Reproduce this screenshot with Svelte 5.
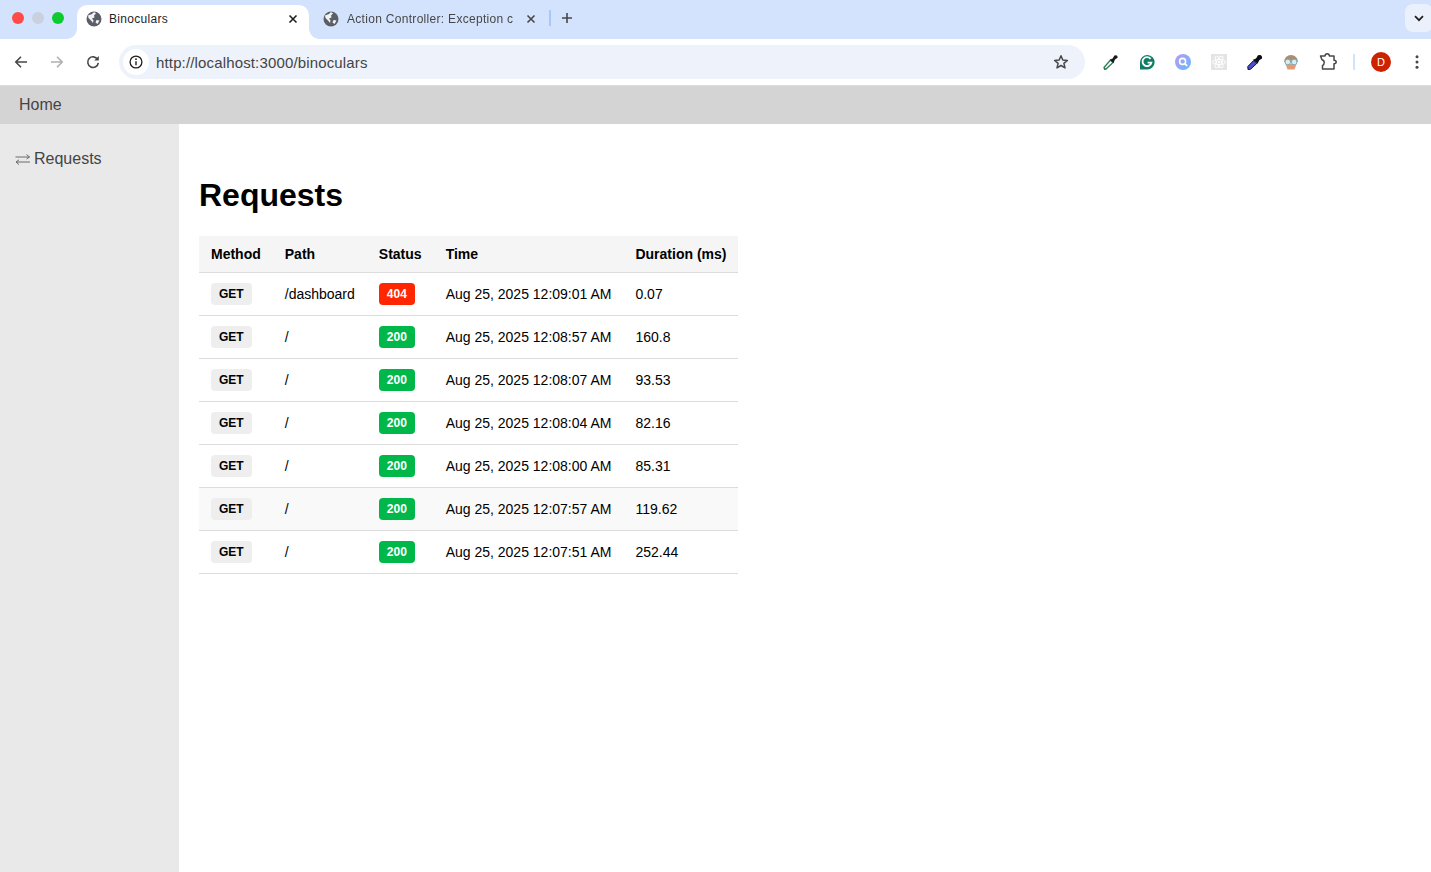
<script>
  const requests = [
    { path: "/dashboard", status: 404, time: "Aug 25, 2025 12:09:01 AM", duration: "0.07" },
    { path: "/", status: 200, time: "Aug 25, 2025 12:08:57 AM", duration: "160.8" },
    { path: "/", status: 200, time: "Aug 25, 2025 12:08:07 AM", duration: "93.53" },
    { path: "/", status: 200, time: "Aug 25, 2025 12:08:04 AM", duration: "82.16" },
    { path: "/", status: 200, time: "Aug 25, 2025 12:08:00 AM", duration: "85.31" },
    { path: "/", status: 200, time: "Aug 25, 2025 12:07:57 AM", duration: "119.62", hover: true },
    { path: "/", status: 200, time: "Aug 25, 2025 12:07:51 AM", duration: "252.44" }
  ];
</script>

{#snippet globe()}
  <svg class="globe" width="16" height="16" viewBox="0 0 16 16">
    <circle cx="8" cy="8" r="7.5" fill="#5b5e66" />
    <path d="M2 4.5 L6 3 L8 1 L10 2.5 L8 4.5 L8.5 6.5 L6 7.5 L7.5 9.5 L7 12 L5.5 10 L2.5 7 Z" fill="#fff" opacity="0.92" />
    <path d="M10.5 9 L13.5 9.5 L11.5 13 L9.5 11.5 Z" fill="#fff" opacity="0.92" />
  </svg>
{/snippet}

<div class="browser">
  <div class="tabstrip">
    <div class="lights">
      <span class="light red"></span>
      <span class="light grey"></span>
      <span class="light green"></span>
    </div>
    <div class="tab active">
      {@render globe()}
      <span class="tab-title">Binoculars</span>
      <svg class="close" width="10" height="10" viewBox="0 0 10 10"><path d="M1.5 1.5 L8.5 8.5 M8.5 1.5 L1.5 8.5" stroke="#1f1f1f" stroke-width="1.6" /></svg>
    </div>
    <div class="tab">
      {@render globe()}
      <span class="tab-title faded">Action Controller: Exception c</span>
      <svg class="close" width="10" height="10" viewBox="0 0 10 10"><path d="M1.5 1.5 L8.5 8.5 M8.5 1.5 L1.5 8.5" stroke="#474747" stroke-width="1.6" /></svg>
    </div>
    <span class="tab-sep"></span>
    <svg class="plus" width="12" height="12" viewBox="0 0 12 12"><path d="M6 1 V11 M1 6 H11" stroke="#474747" stroke-width="1.6" /></svg>
    <div class="tab-menu">
      <svg width="10" height="7" viewBox="0 0 10 7"><path d="M1 1.2 L5 5.2 L9 1.2" fill="none" stroke="#1f1f1f" stroke-width="1.7" /></svg>
    </div>
  </div>

  <div class="toolbar">
    <button class="nav-btn" aria-label="Back">
      <svg width="14" height="14" viewBox="0 0 14 14"><path d="M13 7 H2 M7 1.8 L1.8 7 L7 12.2" fill="none" stroke="#474747" stroke-width="1.6" /></svg>
    </button>
    <button class="nav-btn" aria-label="Forward">
      <svg width="14" height="14" viewBox="0 0 14 14"><path d="M1 7 H12 M7 1.8 L12.2 7 L7 12.2" fill="none" stroke="#b0b0b0" stroke-width="1.6" /></svg>
    </button>
    <button class="nav-btn" aria-label="Reload">
      <svg width="14" height="14" viewBox="0 0 14 14"><path d="M11.6 4.4 A5.3 5.3 0 1 0 12.3 7.8" fill="none" stroke="#474747" stroke-width="1.6" /><path d="M12.8 1 V5.6 H8.2 Z" fill="#474747" /></svg>
    </button>
    <div class="omnibox">
      <span class="info">
        <svg width="14" height="14" viewBox="0 0 14 14"><circle cx="7" cy="7" r="5.9" fill="none" stroke="#1f1f1f" stroke-width="1.3" /><path d="M7 6.2 V10.2" stroke="#1f1f1f" stroke-width="1.4" /><circle cx="7" cy="4.2" r="0.9" fill="#1f1f1f" /></svg>
      </span>
      <span class="url">http://localhost:3000/binoculars</span>
      <svg class="star" width="16" height="16" viewBox="0 0 16 16"><path d="M8 1.8 L9.8 6 L14.4 6.4 L10.9 9.4 L12 13.9 L8 11.5 L4 13.9 L5.1 9.4 L1.6 6.4 L6.2 6 Z" fill="none" stroke="#474747" stroke-width="1.5" stroke-linejoin="round" /></svg>
    </div>
    <div class="extensions">
      <svg width="16" height="16" viewBox="0 0 16 16"><path d="M1.5 15 L1 13.5 L7.5 6 L10 8.5 L3 15 Z" fill="none" stroke="#2f7d58" stroke-width="1.3" /><path d="M1 15.5 L3 15.5 L1 13 Z" fill="#1f6e4c" /><path d="M6.8 5.8 L9.6 4.6 L11.4 1.6 Q15 0 14.6 3.8 L12 5.6 L10.4 9.2 Z" fill="#1b1b1b" /></svg>
      <svg width="16" height="16" viewBox="0 0 16 16"><path d="M1 15.5 V8 A7.3 7.3 0 1 1 8 15.5 Z" fill="#0f7c64" /><path d="M11.6 4.9 A4.5 4.5 0 1 0 12.4 8.6 H8.6" fill="none" stroke="#fff" stroke-width="1.9" /></svg>
      <svg width="16" height="16" viewBox="0 0 16 16"><defs><linearGradient id="lens" x1="0" y1="0" x2="1" y2="1"><stop offset="0" stop-color="#b79cf5" /><stop offset="1" stop-color="#67b8fb" /></linearGradient></defs><circle cx="8" cy="8" r="8" fill="url(#lens)" /><circle cx="7.6" cy="7.4" r="3" fill="none" stroke="#fff" stroke-width="1.6" /><path d="M9.8 9.6 L12.2 12" stroke="#fff" stroke-width="1.7" /></svg>
      <svg width="16" height="16" viewBox="0 0 16 16"><rect width="16" height="16" fill="#e4e4e4" /><g fill="none" stroke="#fff" stroke-width="0.9"><ellipse cx="8" cy="8" rx="6.5" ry="2.5" /><ellipse cx="8" cy="8" rx="6.5" ry="2.5" transform="rotate(60 8 8)" /><ellipse cx="8" cy="8" rx="6.5" ry="2.5" transform="rotate(120 8 8)" /></g><circle cx="8" cy="8" r="1.3" fill="#fff" /></svg>
      <svg width="16" height="16" viewBox="0 0 16 16"><path d="M1 15.5 L0.8 12.5 L6.6 6.5 L9.8 9.4 L3.6 15.2 Z" fill="#4a50c8" stroke="#10103a" stroke-width="1" /><path d="M6 5.8 L9 4.4 L11 1.2 Q15.6 0 15 4.6 L12.2 6.2 L10.6 9.8 Z" fill="#0c0c14" /></svg>
      <svg width="16" height="16" viewBox="0 0 16 16"><path d="M1 8 A7 7 0 0 1 15 8 Z" fill="#a98f72" /><path d="M2.5 10 H13.5 L11.5 15.5 H4.5 Z" fill="#e59a76" /><circle cx="4.8" cy="8" r="2.8" fill="#d9eef3" stroke="#6fa9b8" stroke-width="0.9" /><circle cx="11.2" cy="8" r="2.8" fill="#d9eef3" stroke="#6fa9b8" stroke-width="0.9" /></svg>
      <svg width="18" height="18" viewBox="0 0 18 18"><path d="M1.5 3 H6 Q6.2 0.8 8.2 0.8 Q10.2 0.8 10.4 3 H15 V7.2 Q17.2 7.4 17.2 9 Q17.2 10.6 15 10.8 V16 H3.5 V12.5 Q5.2 12 5.2 9.5 Q5.2 7.2 3 6.8 Z" fill="none" stroke="#474747" stroke-width="1.5" stroke-linejoin="round" /></svg>
    </div>
    <span class="toolbar-sep"></span>
    <span class="avatar">D</span>
    <svg class="kebab" width="4" height="14" viewBox="0 0 4 14"><circle cx="2" cy="1.8" r="1.5" fill="#474747" /><circle cx="2" cy="7" r="1.5" fill="#474747" /><circle cx="2" cy="12.2" r="1.5" fill="#474747" /></svg>
  </div>

  <nav class="topnav"><a href="#home">Home</a></nav>

  <div class="layout">
    <aside class="sidebar">
      <a class="side-link" href="#requests">
        <svg width="16" height="11" viewBox="0 0 16 11"><path d="M0.5 3 H14.5 M11.5 0.5 L14.5 3 L11.5 5 M15 8 H1 M4 5.8 L1 8 L4 10.5" fill="none" stroke="#6a6a6a" stroke-width="1" /></svg>
        Requests
      </a>
    </aside>
    <main class="content">
      <h1>Requests</h1>
      <table>
        <thead>
          <tr>
            <th>Method</th>
            <th>Path</th>
            <th>Status</th>
            <th>Time</th>
            <th>Duration (ms)</th>
          </tr>
        </thead>
        <tbody>
          {#each requests as req}
            <tr class:hover={req.hover}>
              <td><span class="method">GET</span></td>
              <td>{req.path}</td>
              <td><span class="status" class:error={req.status >= 400}>{req.status}</span></td>
              <td>{req.time}</td>
              <td>{req.duration}</td>
            </tr>
          {/each}
        </tbody>
      </table>
    </main>
  </div>
</div>

<style>
  :global(body) {
    margin: 0;
    font-family: "Liberation Sans", Arial, sans-serif;
    background: #fff;
  }

  .browser {
    display: flex;
    flex-direction: column;
    height: 872px;
    overflow: hidden;
  }

  .tabstrip {
    display: flex;
    align-items: flex-end;
    flex: 0 0 39px;
    background: #d3e3fd;
    box-sizing: border-box;
  }

  .lights {
    display: flex;
    align-self: center;
    gap: 8px;
    width: 77px;
    padding-left: 12px;
    box-sizing: border-box;
    margin-top: -3px;
  }

  .light {
    width: 12px;
    height: 12px;
    border-radius: 50%;
  }
  .light.red { background: #ff4b45; }
  .light.grey { background: #c9d1de; }
  .light.green { background: #0ccb2e; }

  .tab {
    position: relative;
    display: flex;
    align-items: center;
    width: 232px;
    height: 34px;
    box-sizing: border-box;
    padding: 0 11px 6px 9px;
    border-radius: 10px 10px 0 0;
    font-size: 12px;
    letter-spacing: 0.3px;
    color: #474747;
  }

  .tab.active {
    background: #fff;
    color: #1f1f1f;
  }

  .tab.active::before,
  .tab.active::after {
    content: "";
    position: absolute;
    bottom: 0;
    width: 10px;
    height: 10px;
    background: radial-gradient(circle at 0 0, #d3e3fd 9.5px, #fff 10px);
  }
  .tab.active::before { left: -10px; }
  .tab.active::after {
    right: -10px;
    background: radial-gradient(circle at 100% 0, #d3e3fd 9.5px, #fff 10px);
  }

  .tab-title {
    flex: 1;
    margin-left: 7px;
    white-space: nowrap;
  }

  .tab-title.faded {
    mask-image: linear-gradient(90deg, #000 92%, transparent);
    margin-left: 8px;
  }

  .tab:not(.active) {
    padding-left: 14px;
    width: 241px;
    padding-right: 14px;
  }

  .tab-sep {
    align-self: center;
    width: 2px;
    height: 16px;
    margin: -3px 0 0 -1px;
    background: #a8c7fa;
  }

  .plus {
    align-self: center;
    margin: -3px 0 0 10px;
  }

  .tab-menu {
    align-self: center;
    display: flex;
    align-items: center;
    justify-content: center;
    width: 28px;
    height: 28px;
    margin: -3px 0 0 auto;
    margin-right: -2px;
    border-radius: 8px;
    background: #eaf1fd;
  }

  .toolbar {
    position: relative;
    display: flex;
    align-items: center;
    flex: 0 0 46px;
    box-sizing: border-box;
    padding-left: 3px;
    background: #fff;
    border-radius: 10px 0 0 0;
  }

  .nav-btn {
    display: flex;
    align-items: center;
    justify-content: center;
    width: 36px;
    height: 32px;
    padding: 0;
    border: 0;
    background: none;
  }

  .omnibox {
    display: flex;
    align-items: center;
    width: 966px;
    height: 34px;
    box-sizing: border-box;
    margin-left: 8px;
    padding: 0 16px 0 4px;
    border-radius: 17px;
    background: #edf2fb;
  }

  .info {
    display: flex;
    align-items: center;
    justify-content: center;
    width: 26px;
    height: 26px;
    border-radius: 50%;
    background: #fff;
  }

  .url {
    flex: 1;
    margin-left: 7px;
    font-size: 15px;
    letter-spacing: 0.15px;
    color: #444;
  }

  .extensions {
    display: flex;
    align-items: center;
    gap: 20px;
    margin-left: 18px;
  }

  .toolbar-sep {
    width: 2px;
    height: 16px;
    margin-left: 16px;
    background: #d3e3fd;
  }

  .avatar {
    display: flex;
    align-items: center;
    justify-content: center;
    width: 20px;
    height: 20px;
    margin-left: 16px;
    border-radius: 50%;
    background: #cc2200;
    color: #fff;
    font-size: 11px;
  }

  .kebab {
    margin-left: 24px;
  }

  .topnav {
    display: flex;
    align-items: center;
    flex: 0 0 39px;
    box-sizing: border-box;
    padding-left: 19px;
    background: #d4d4d4;
    border-top: 1px solid #dcdcdc;
  }

  a {
    color: #444;
    text-decoration: none;
    font-size: 16px;
  }

  .layout {
    display: flex;
    flex: 1;
  }

  .sidebar {
    flex: 0 0 179px;
    box-sizing: border-box;
    padding: 26px 15px;
    background: #e9e9e9;
  }

  .side-link {
    display: flex;
    align-items: center;
    gap: 3px;
    line-height: 18px;
  }

  .content {
    flex: 1;
    padding: 0 20px;
  }

  h1 {
    margin: 53px 0 22px;
    font-size: 32px;
    line-height: 37px;
    color: #000;
  }

  table {
    border-collapse: collapse;
    font-size: 14px;
    color: #000;
  }

  th {
    height: 36px;
    padding: 0 12px;
    text-align: left;
    white-space: nowrap;
    background: #f5f5f5;
    border-bottom: 1px solid #ddd;
  }

  td {
    height: 42px;
    padding: 0 12px;
    white-space: nowrap;
    border-bottom: 1px solid #ddd;
  }

  tr.hover td {
    background: #f9f9f9;
  }

  .method,
  .status {
    display: inline-block;
    box-sizing: border-box;
    height: 22px;
    line-height: 23px;
    border-radius: 4px;
    font-size: 12px;
    font-weight: 700;
    vertical-align: middle;
  }

  .method {
    padding: 0 8px;
    background: #eee;
  }

  .status {
    padding: 0 8px;
    background: #00b84a;
    color: #fff;
  }

  .status.error {
    background: #ff2600;
  }
</style>
